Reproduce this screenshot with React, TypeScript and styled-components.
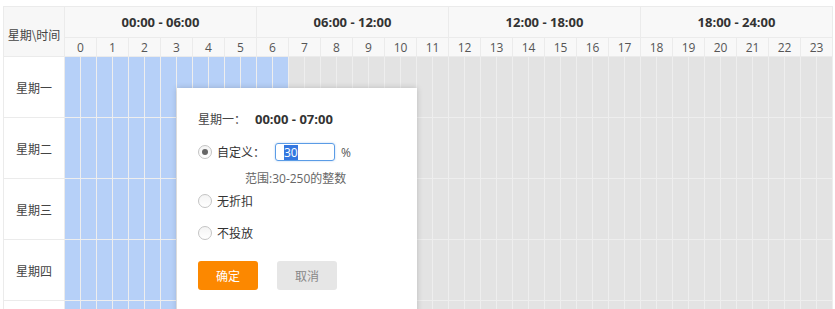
import { createGlobalStyle, styled } from 'styled-components';

const GROUPS = ['00:00 - 06:00', '06:00 - 12:00', '12:00 - 18:00', '18:00 - 24:00'];
const HOURS = Array.from({ length: 24 }, (_, i) => i);
// the fifth row only peeks in at the bottom edge, its label is below the fold
const DAYS = ['星期一', '星期二', '星期三', '星期四', ''];
// half-hour slots picked per day (0..47)
const SELECTED_UNTIL = [14, 8, 8, 8, 8];

const GlobalStyle = createGlobalStyle`
  html, body {
    margin: 0;
    padding: 0;
    background: #fff;
    overflow: hidden;
  }
  body {
    font-family: "Open Sans", "Noto Sans CJK SC", sans-serif;
    font-size: 12px;
    color: #333;
  }
`;

const App = () => {
  return (
    <>
      <GlobalStyle />
      <St.Page>
        <St.Table>
          <St.Corner>星期\时间</St.Corner>
          {GROUPS.map((g) => (
            <St.Group key={g}>{g}</St.Group>
          ))}
          {HOURS.map((h) => (
            <St.Hour key={h}>{h}</St.Hour>
          ))}
          {DAYS.map((day, d) => (
            <St.Row key={d}>
              <St.Day>{day}</St.Day>
              {Array.from({ length: 48 }, (_, i) => (
                <St.Slot key={i} $on={i < SELECTED_UNTIL[d]} />
              ))}
            </St.Row>
          ))}
        </St.Table>

        <St.Popup>
          <St.Title>
            <St.TitleLabel>星期一：</St.TitleLabel>
            <b>00:00 - 07:00</b>
          </St.Title>
          <St.Option $top={11}>
            <St.Radio $checked />
            <St.OptionText>自定义：</St.OptionText>
            <St.Input>
              <St.Selected>30</St.Selected>
            </St.Input>
            <St.Unit>%</St.Unit>
          </St.Option>
          <St.Hint>范围:30-250的整数</St.Hint>
          <St.Option $top={2}>
            <St.Radio />
            <St.OptionText>无折扣</St.OptionText>
          </St.Option>
          <St.Option $top={10}>
            <St.Radio />
            <St.OptionText>不投放</St.OptionText>
          </St.Option>
          <St.Buttons>
            <St.Button $primary>确定</St.Button>
            <St.Button>取消</St.Button>
          </St.Buttons>
        </St.Popup>
      </St.Page>
    </>
  );
};

export default App;

const St = {
  Page: styled.div`
    position: relative;
    width: 835px;
    height: 309px;
    padding: 6px 0 0 3px;
    box-sizing: border-box;
    overflow: hidden;
  `,
  Table: styled.div`
    display: grid;
    grid-template-columns: 61px repeat(48, 16px);
    grid-template-rows: 31px 19px;
    grid-auto-rows: 61px;
    width: max-content;
    border-top: 1px solid #ebebeb;
    border-left: 1px solid #ebebeb;
  `,
  Corner: styled.div`
    grid-row: span 2;
    display: flex;
    align-items: center;
    justify-content: center;
    padding-top: 6px;
    box-sizing: border-box;
    background: #f7f7f7;
    border-right: 1px solid #ebebeb;
    border-bottom: 1px solid #ebebeb;
    font-family: "Noto Sans CJK SC", sans-serif;
    color: #444;
  `,
  Group: styled.div`
    grid-column: span 12;
    display: flex;
    align-items: center;
    justify-content: center;
    background: #f8f8f8;
    border-right: 1px solid #ebebeb;
    border-bottom: 1px solid #ebebeb;
    font-size: 13px;
    font-weight: 700;
    color: #333;
  `,
  Hour: styled.div`
    grid-column: span 2;
    display: flex;
    align-items: center;
    justify-content: center;
    background: #f8f8f8;
    border-right: 1px solid #ebebeb;
    border-bottom: 1px solid #ebebeb;
    color: #555;
  `,
  Row: styled.div`
    display: contents;
  `,
  Day: styled.div`
    display: flex;
    align-items: center;
    justify-content: center;
    background: #fff;
    border-right: 1px solid #ebebeb;
    border-bottom: 1px solid #ebebeb;
    font-family: "Noto Sans CJK SC", sans-serif;
    color: #444;
  `,
  Slot: styled.div<{ $on?: boolean }>`
    background: ${({ $on }) => ($on ? '#b6d0f8' : '#e3e3e3')};
    border-right: 1px solid #eeeeee;
    border-bottom: 1px solid #eeeeee;
  `,
  Popup: styled.div`
    position: absolute;
    left: 177px;
    top: 88px;
    width: 240px;
    height: 240px;
    padding: 20px 21px;
    box-sizing: border-box;
    background: #fff;
    box-shadow: 0 0 6px rgba(0, 0, 0, 0.18);
    font-family: "Open Sans", "Noto Sans CJK SC", sans-serif;
  `,
  Title: styled.div`
    display: flex;
    align-items: center;
    height: 22px;

    & > b {
      font-size: 13px;
      font-weight: 700;
      color: #333;
    }
  `,
  TitleLabel: styled.span`
    width: 57px;
    color: #444;
  `,
  Option: styled.div<{ $top: number }>`
    display: flex;
    align-items: center;
    height: 22px;
    margin-top: ${({ $top }) => $top}px;
  `,
  Radio: styled.span<{ $checked?: boolean }>`
    position: relative;
    width: 14px;
    height: 14px;
    box-sizing: border-box;
    border: 1px solid #c4c4c4;
    border-radius: 50%;
    background: linear-gradient(#f4f4f4, #fff);

    &::after {
      content: '';
      display: ${({ $checked }) => ($checked ? 'block' : 'none')};
      position: absolute;
      left: 3px;
      top: 3px;
      width: 6px;
      height: 6px;
      border-radius: 50%;
      background: #666;
    }
  `,
  OptionText: styled.span`
    margin-left: 5px;
    width: 58px;
    color: #333;
  `,
  Input: styled.div`
    display: flex;
    align-items: center;
    width: 60px;
    height: 18px;
    box-sizing: border-box;
    padding-left: 8px;
    border: 1px solid #5b9ce6;
    border-radius: 3px;
    box-shadow: 0 0 2px rgba(91, 156, 230, 0.5);
  `,
  Selected: styled.span`
    background: #3477e0;
    color: #fff;
    line-height: 15px;
    font-size: 12px;
  `,
  Unit: styled.span`
    margin-left: 6px;
    color: #555;
  `,
  Hint: styled.div`
    height: 18px;
    margin-top: 7px;
    padding-left: 47px;
    line-height: 18px;
    color: #666;
  `,
  Buttons: styled.div`
    display: flex;
    gap: 19px;
    margin-top: 17px;
  `,
  Button: styled.button<{ $primary?: boolean }>`
    width: 60px;
    height: 29px;
    padding: 0;
    border: none;
    border-radius: 3px;
    background: ${({ $primary }) => ($primary ? '#fc8800' : '#e6e6e6')};
    color: ${({ $primary }) => ($primary ? '#fff' : '#888')};
    font-family: "Noto Sans CJK SC", sans-serif;
    font-size: 12px;
    cursor: pointer;
  `,
};
